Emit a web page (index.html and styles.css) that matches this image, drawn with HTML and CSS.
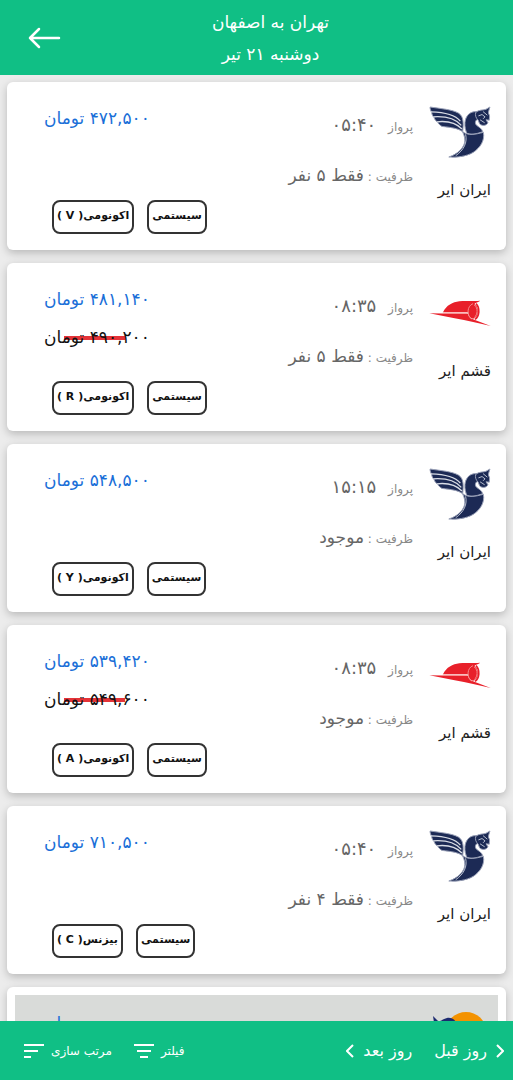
FILE: index.html
```
<!DOCTYPE html>
<html lang="fa" dir="rtl">
<head>
    <meta charset="UTF-8">
    <meta name="viewport" content="width=device-width, initial-scale=1.0">
    <title>تهران به اصفهان</title>
    <link rel="stylesheet" href="styles.css">
</head>
<body>
    <svg class="defs" aria-hidden="true">
        <symbol id="iranair" viewBox="26 36 188 158">
            <g fill="#1c2a55" stroke="#9aa2b8" stroke-width="3" stroke-linejoin="round">
                <path d="M29 39 C60 44 96 46 116 58 C132 68 131 92 128 114 C116 104 92 101 65 98 C59 94 54 90 52 85 C47 82 43 77 41 71 C37 67 34 61 34 56 C31 51 29 45 29 39 Z"/>
                <path d="M170 53 C150 52 137 66 135 86 C134 100 137 111 141 119 C158 125 175 119 189 114 C187 105 177 100 172 96 C165 90 165 82 173 76 L176 66 Z"/>
                <path d="M127 113 C144 128 168 122 191 116 C196 140 182 163 160 177 C140 189 110 193 86 191 C110 183 127 168 133 151 C137 138 133 124 127 113 Z"/>
                <path d="M168 55 C178 47 190 49 199 46 L211 39 C209 47 206 52 207 59 C212 66 209 73 209 79 L199 78 L205 87 C200 97 187 97 180 91 L175 79 C169 73 165 65 168 55 Z"/>
            </g>
            <g fill="none" stroke="#d9dde6" stroke-width="4">
                <path d="M32 54 C66 55 102 59 121 82"/>
                <path d="M39 69 C68 67 104 72 124 95"/>
                <path d="M50 84 C78 81 108 87 126 106"/>
            </g>
            <g fill="none" stroke="#b9c0cf" stroke-width="3">
                <path d="M137 122 C143 146 132 170 107 187"/>
                <path d="M176 66 L187 62 L196 69 L190 75 M181 78 L195 87 M190 53 L203 64"/>
            </g>
        </symbol>
        <symbol id="qeshm" viewBox="28 32 186 80">
            <path d="M29 73 L145 75 C147 84 153 89 160 91 L213 111 C180 104 142 94 105 88 Z" fill="#e8202a"/>
            <path d="M70 70 C80 49 99 39 119 37 C140 34 162 38 182 35 C175 39 168 41 165 44 L160 68 L144 70 Z" fill="#e8202a"/>
            <ellipse cx="160" cy="67" rx="15" ry="22" fill="#e8202a"/>
            <path d="M169 44 C182 58 179 82 166 91" fill="none" stroke="#e8202a" stroke-width="5"/>
            <path d="M160 44 C142 50 140 80 156 90 M68 73 L144 73 M164 48 C176 58 174 76 164 86" fill="none" stroke="#f58a8a" stroke-width="3"/>
        </symbol>
        <symbol id="sunair" viewBox="0 0 60 52">
            <ellipse cx="36" cy="20" rx="20" ry="19" fill="#f39200"/>
            <path d="M3 5 L7 9 C10 12 12 8 17 7 C23 6 27 11 29 16 L20 30 L5 18 Z" fill="#1c2a70"/>
        </symbol>
    </svg>

    <div class="app">
        <header class="topbar">
            <div class="route">
                <h1>تهران به اصفهان</h1>
                <p>دوشنبه ۲۱ تیر</p>
            </div>
            <button type="button" class="back" aria-label="بازگشت">
                <svg viewBox="0 0 34 22"><path d="M32 11 H3 M12 2 L3 11 L12 20"/></svg>
            </button>
        </header>

        <main class="flights">
            <article class="card">
                <div class="airline">
                    <svg class="logo"><use href="#iranair"/></svg>
                    <h2>ایران ایر</h2>
                </div>
                <div class="info">
                    <p class="time">پرواز <b>۰۵:۴۰</b></p>
                    <p>ظرفیت : <b>فقط ۵ نفر</b></p>
                </div>
                <div class="offer">
                    <p class="price">۴۷۲,۵۰۰ تومان</p>
                    <div class="tags"><span>سیستمی</span><span>اکونومی( V )</span></div>
                </div>
            </article>

            <article class="card">
                <div class="airline">
                    <svg class="logo"><use href="#qeshm"/></svg>
                    <h2>قشم ایر</h2>
                </div>
                <div class="info">
                    <p class="time">پرواز <b>۰۸:۳۵</b></p>
                    <p>ظرفیت : <b>فقط ۵ نفر</b></p>
                </div>
                <div class="offer">
                    <p class="price">۴۸۱,۱۴۰ تومان</p>
                    <del class="old-price">۴۹۰,۲۰۰ تومان</del>
                    <div class="tags"><span>سیستمی</span><span>اکونومی( R )</span></div>
                </div>
            </article>

            <article class="card">
                <div class="airline">
                    <svg class="logo"><use href="#iranair"/></svg>
                    <h2>ایران ایر</h2>
                </div>
                <div class="info">
                    <p class="time">پرواز <b>۱۵:۱۵</b></p>
                    <p>ظرفیت : <b>موجود</b></p>
                </div>
                <div class="offer">
                    <p class="price">۵۴۸,۵۰۰ تومان</p>
                    <div class="tags"><span>سیستمی</span><span>اکونومی( Y )</span></div>
                </div>
            </article>

            <article class="card">
                <div class="airline">
                    <svg class="logo"><use href="#qeshm"/></svg>
                    <h2>قشم ایر</h2>
                </div>
                <div class="info">
                    <p class="time">پرواز <b>۰۸:۳۵</b></p>
                    <p>ظرفیت : <b>موجود</b></p>
                </div>
                <div class="offer">
                    <p class="price">۵۳۹,۴۲۰ تومان</p>
                    <del class="old-price">۵۴۹,۶۰۰ تومان</del>
                    <div class="tags"><span>سیستمی</span><span>اکونومی( A )</span></div>
                </div>
            </article>

            <article class="card">
                <div class="airline">
                    <svg class="logo"><use href="#iranair"/></svg>
                    <h2>ایران ایر</h2>
                </div>
                <div class="info">
                    <p class="time">پرواز <b>۰۵:۴۰</b></p>
                    <p>ظرفیت : <b>فقط ۴ نفر</b></p>
                </div>
                <div class="offer">
                    <p class="price">۷۱۰,۵۰۰ تومان</p>
                    <div class="tags"><span>سیستمی</span><span>بیزنس( C )</span></div>
                </div>
            </article>

            <article class="card sold-out">
                <div class="airline">
                    <svg class="logo"><use href="#sunair"/></svg>
                </div>
                <div class="offer">
                    <p class="price">تومان</p>
                </div>
            </article>
        </main>

        <footer class="bottombar">
            <div class="days">
                <button type="button"><svg class="chevron" viewBox="0 0 8 14"><path d="M1 1 L7 7 L1 13"/></svg>روز قبل</button>
                <button type="button">روز بعد<svg class="chevron" viewBox="0 0 8 14"><path d="M7 1 L1 7 L7 13"/></svg></button>
            </div>
            <div class="tools">
                <button type="button">فیلتر<svg class="lines" viewBox="0 0 20 14"><path d="M0 1 H20 M3 7 H17 M6 13 H14"/></svg></button>
                <button type="button">مرتب سازی<svg class="lines" viewBox="0 0 20 14"><path d="M0 1 H20 M0 7 H14 M0 13 H7"/></svg></button>
            </div>
        </footer>
    </div>
</body>
</html>
```

FILE: styles.css
```
* {
    box-sizing: border-box;
}

body {
    margin: 0;
    font-family: "DejaVu Sans", sans-serif;
    background-color: #ececec;
    color: #222;
}

h1, h2, p {
    margin: 0;
    font-weight: normal;
}

button {
    padding: 0;
    border: none;
    background: none;
    color: inherit;
    font-family: inherit;
    cursor: pointer;
}

svg {
    display: block;
}

.defs {
    position: absolute;
    width: 0;
    height: 0;
}

.app {
    display: flex;
    flex-direction: column;
    height: 100vh;
}

/* header */
.topbar {
    display: grid;
    grid-template-columns: 60px 1fr 88px;
    align-items: center;
    flex-shrink: 0;
    height: 75px;
    background-color: #10bf85;
    color: #fff;
}

.route {
    grid-column: 2;
    text-align: center;
}

.route h1, .route p {
    font-size: 17px;
    line-height: 32px;
}

.back {
    justify-self: center;
}

.back svg {
    width: 34px;
    height: 22px;
    fill: none;
    stroke: #fff;
    stroke-width: 2.5;
    stroke-linecap: round;
    stroke-linejoin: round;
}

/* flight list */
.flights {
    flex: 1;
    min-height: 0;
    display: flex;
    flex-direction: column;
    gap: 13px;
    padding: 7px;
    overflow-y: auto;
    scrollbar-width: none;
}

.card {
    display: flex;
    flex-shrink: 0;
    min-height: 168px;
    padding: 24px 15px 16px 37px;
    background-color: #fff;
    border-radius: 6px;
    box-shadow: 0 3px 8px rgba(0, 0, 0, 0.22);
}

.airline {
    flex: 0 0 62px;
}

.logo {
    width: 62px;
    height: 52px;
}

.airline h2 {
    margin-top: 20px;
    font-size: 15px;
    line-height: 24px;
    white-space: nowrap;
}

.info {
    flex: 1;
    padding: 7px 16px 0 0;
    color: #888;
    font-size: 12px;
    white-space: nowrap;
}

.info p {
    line-height: 24px;
    margin-bottom: 24px;
}

.info b {
    font-size: 17px;
    font-weight: normal;
    color: #666;
}

.info .time b {
    margin-right: 8px;
    font-size: 18px;
}

.offer {
    display: flex;
    flex-direction: column;
    align-items: flex-end;
    font-size: 17px;
    line-height: 24px;
}

.price {
    color: #1a6fd8;
}

.old-price {
    position: relative;
    isolation: isolate;
    margin-top: 14px;
    color: #111;
    text-decoration: none;
}

.old-price::before {
    content: "";
    position: absolute;
    z-index: -1;
    left: 20px;
    top: 11px;
    width: 61px;
    height: 4px;
    background-color: #e53338;
}

.tags {
    display: flex;
    gap: 13px;
    margin-top: auto;
    margin-left: 8px;
}

.tags span {
    padding: 2px 3px 4px;
    border: 2px solid #333;
    border-radius: 8px;
    color: #111;
    font-size: 11px;
    font-weight: bold;
}

.sold-out {
    border: 8px solid #fff;
    padding: 16px 7px 8px 29px;
    background-color: #d9dbd9;
    justify-content: space-between;
}

/* footer */
.bottombar {
    display: flex;
    justify-content: space-between;
    align-items: center;
    flex-shrink: 0;
    height: 59px;
    padding: 0 9px 0 24px;
    background-color: #10bf85;
    color: #fff;
}

.days, .tools {
    display: flex;
    gap: 22px;
}

.bottombar button {
    display: flex;
    align-items: center;
    gap: 9px;
    font-size: 16px;
    line-height: 24px;
    white-space: nowrap;
}

.tools button {
    gap: 7px;
    font-size: 12px;
}

.bottombar svg {
    fill: none;
    stroke: #fff;
    stroke-width: 2;
}

.chevron {
    width: 8px;
    height: 14px;
}

.lines {
    width: 20px;
    height: 14px;
}
```
